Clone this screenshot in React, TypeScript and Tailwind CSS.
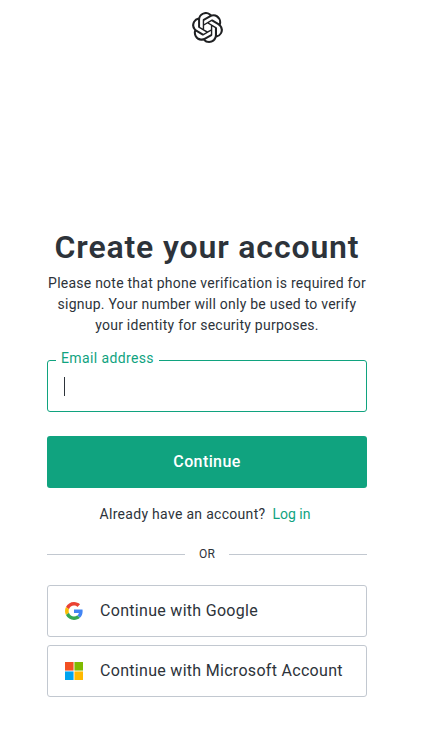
import React from 'react';
import { SiOpenai } from 'react-icons/si';

interface SocialButtonProps {
  icon: React.ReactNode;
  label: string;
}

const GoogleIcon = () => (
  <svg viewBox="0 0 48 48" className="w-[18px] h-[18px]">
    <path
      fill="#EA4335"
      d="M24 9.5c3.54 0 6.71 1.22 9.21 3.6l6.85-6.85C35.9 2.38 30.47 0 24 0 14.62 0 6.51 5.38 2.56 13.22l7.98 6.19C12.43 13.72 17.74 9.5 24 9.5z"
    />
    <path
      fill="#4285F4"
      d="M46.98 24.55c0-1.57-.15-3.09-.38-4.55H24v9.02h12.94c-.58 2.96-2.26 5.48-4.78 7.18l7.73 6c4.51-4.18 7.09-10.36 7.09-17.65z"
    />
    <path
      fill="#FBBC05"
      d="M10.53 28.59c-.48-1.45-.76-2.99-.76-4.59s.27-3.14.76-4.59l-7.98-6.19C.92 16.46 0 20.12 0 24c0 3.88.92 7.54 2.56 10.78l7.97-6.19z"
    />
    <path
      fill="#34A853"
      d="M24 48c6.48 0 11.93-2.13 15.89-5.81l-7.73-6c-2.15 1.45-4.92 2.3-8.16 2.3-6.26 0-11.57-4.22-13.47-9.91l-7.98 6.19C6.51 42.62 14.62 48 24 48z"
    />
  </svg>
);

const MicrosoftIcon = () => (
  <svg viewBox="0 0 21 21" className="w-[18px] h-[18px]">
    <path fill="#f25022" d="M0 0h10v10H0z" />
    <path fill="#7fba00" d="M11 0h10v10H11z" />
    <path fill="#00a4ef" d="M0 11h10v10H0z" />
    <path fill="#ffb900" d="M11 11h10v10H11z" />
  </svg>
);

const SocialButton: React.FC<SocialButtonProps> = ({ icon, label }) => (
  <button className="flex h-[52px] w-full items-center rounded-[3px] border border-[#c2c8d0] pl-[17px] text-left">
    {icon}
    <span className="ml-[17px] whitespace-nowrap text-base tracking-[0.3px]">{label}</span>
  </button>
);

export default function App() {
  return (
    <div className="flex min-h-screen flex-col items-center bg-white pr-[11px] font-['Roboto','Liberation_Sans',sans-serif] text-[#2d333a]">
      <header className="flex h-[43px] items-end">
        <SiOpenai className="h-[31px] w-[31px] text-[#202123]" />
      </header>

      <main className="mt-[184px] w-80">
        <h1 className="whitespace-nowrap text-center text-[32px] font-semibold leading-10 tracking-[0.85px]">
          Create your account
        </h1>
        <div className="mt-1.5 whitespace-nowrap text-center text-sm leading-[21px] tracking-[0.24px]">
          <p>Please note that phone verification is required for</p>
          <p>signup. Your number will only be used to verify</p>
          <p>your identity for security purposes.</p>
        </div>

        <div className="relative mt-6 flex h-[52px] items-center rounded-[3px] border border-[#10a37f] pl-4">
          <label className="absolute -top-[13px] left-2 whitespace-nowrap bg-white px-[5px] text-sm leading-[21px] tracking-[0.38px] text-[#10a37f]">
            Email address
          </label>
          <span className="h-[19px] w-px bg-[#2d333a]" />
        </div>

        <button className="mt-6 h-[52px] w-full rounded-[3px] bg-[#10a37f] text-base font-medium tracking-[0.4px] text-white">
          Continue
        </button>

        <p className="mt-4 flex justify-center whitespace-nowrap pr-1 text-sm leading-[21px] tracking-[0.3px]">
          Already have an account?
          <a className="ml-[7px] tracking-normal text-[#10a37f]">Log in</a>
        </p>

        <div className="mt-[19px] flex h-5 items-center">
          <div className="h-px flex-1 bg-[#c2c8d0]" />
          <span className="w-11 text-center text-xs tracking-[0.2px]">OR</span>
          <div className="h-px flex-1 bg-[#c2c8d0]" />
        </div>

        <div className="mt-[21px] flex flex-col gap-2">
          <SocialButton icon={<GoogleIcon />} label="Continue with Google" />
          <SocialButton icon={<MicrosoftIcon />} label="Continue with Microsoft Account" />
        </div>
      </main>
    </div>
  );
}
